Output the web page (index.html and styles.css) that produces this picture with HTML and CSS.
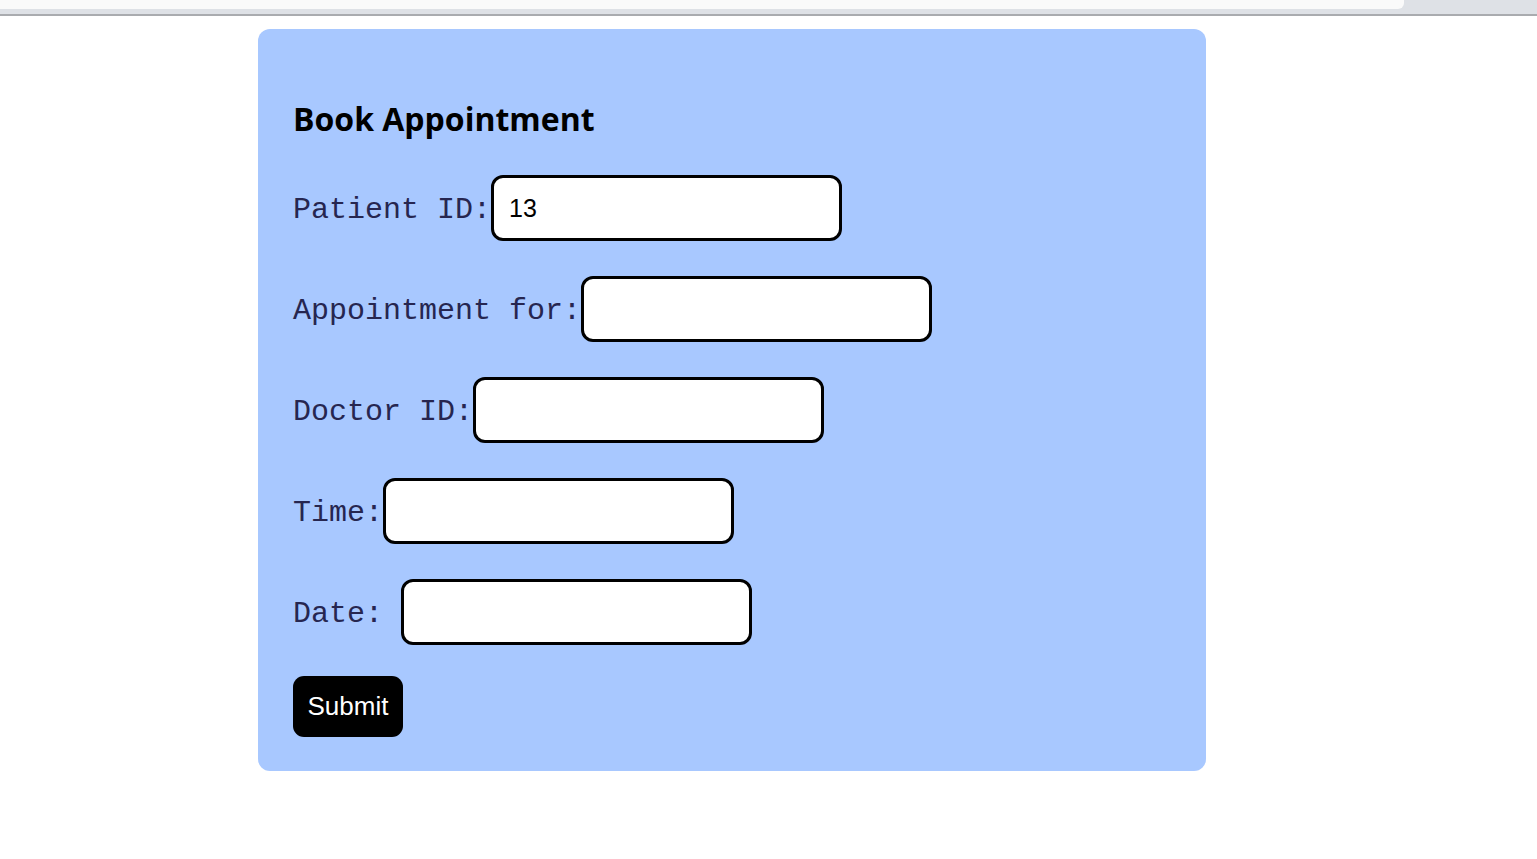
FILE: index.html
```html
<!DOCTYPE html>
<html>
<head>
<meta charset="utf-8">
<link rel="stylesheet" href="styles.css">
</head>
<body>
<div class="chrome">
  <div class="chrome-tab"></div>
  <div class="chrome-rest"></div>
</div>
<div class="page">
  <form class="card">
    <h2 class="title">Book Appointment</h2>
    <div class="rows">
      <div class="row"><label class="label">Patient ID:</label><input class="field" type="text" value="13"></div>
      <div class="row"><label class="label">Appointment for:</label><input class="field" type="text"></div>
      <div class="row"><label class="label">Doctor ID:</label><input class="field" type="text"></div>
      <div class="row"><label class="label">Time:</label><input class="field" type="text"></div>
      <div class="row"><label class="label">Date:&nbsp;</label><input class="field" type="text"></div>
    </div>
    <button class="submit" type="button">Submit</button>
  </form>
</div>
</body>
</html>
```
FILE: styles.css
```css
html, body {
  margin: 0;
  padding: 0;
  background: #ffffff;
}

.chrome {
  display: flex;
  height: 16px;
  background: #dee1e6;
  border-bottom: 2px solid #a9abaf;
  box-sizing: border-box;
}

.chrome-tab {
  width: 1404px;
  height: 9px;
  background: #fafafa;
  border-bottom-right-radius: 6px;
}

.chrome-rest {
  flex: 1;
}

.page {
  padding: 13px 0 0 258px;
}

.card {
  width: 948px;
  height: 742px;
  box-sizing: border-box;
  background: #a8c8ff;
  border-radius: 12px;
  padding: 68px 35px 0 35px;
}

.title {
  margin: 0 0 34px 0;
  font-family: "Open Sans", "Liberation Sans", sans-serif;
  font-weight: 700;
  font-size: 32px;
  line-height: 44px;
  color: #000;
}

.rows {
  display: flex;
  flex-direction: column;
  gap: 35px;
}

.row {
  display: flex;
  align-items: center;
}

.label {
  font-family: "Liberation Mono", "Courier New", monospace;
  font-size: 30px;
  color: #262650;
  white-space: pre;
  padding-top: 4px;
}

.field {
  width: 351px;
  height: 66px;
  box-sizing: border-box;
  border: 3px solid #000;
  border-radius: 12px;
  background: #fff;
  padding: 0 15px;
  font-family: "Liberation Sans", Arial, sans-serif;
  font-size: 25px;
  color: #000;
  outline: none;
}

.submit {
  margin-top: 31px;
  width: 110px;
  height: 61px;
  background: #000;
  color: #fff;
  border: none;
  border-radius: 11px;
  font-family: "Liberation Sans", Arial, sans-serif;
  font-size: 26px;
  padding: 0;
}
```
